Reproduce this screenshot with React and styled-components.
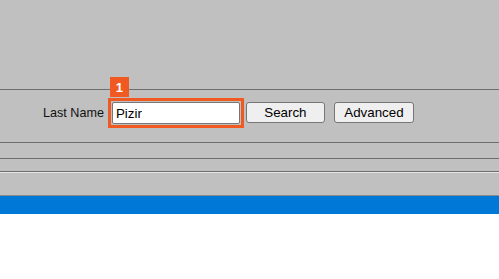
import React from 'react'
import styled, { createGlobalStyle } from 'styled-components'

const GlobalStyle = createGlobalStyle`
  html, body {
    margin: 0;
    padding: 0;
    background: #ffffff;
    font-family: "Liberation Sans", Arial, sans-serif;
  }
`

const Page = styled.div`
  width: 499px;
  display: flex;
  flex-direction: column;
`

const Band = styled.div`
  background: #c0c0c0;
  height: ${p => p.h}px;
  border-bottom: 1px solid ${p => p.line || '#6e6e6e'};
  border-top: ${p => (p.lit ? '1px solid #e6e6e6' : 'none')};
`

const SearchRow = styled.div`
  background: #c0c0c0;
  height: 53px;
  box-sizing: border-box;
  border-bottom: 1px solid #6e6e6e;
  display: flex;
  align-items: flex-start;
  padding: 8px 0 0 43px;
`

const Label = styled.label`
  font-size: 12.6px;
  line-height: 22px;
  color: #111;
  margin: 4px 4px 0 0;
`

const Highlight = styled.div`
  position: relative;
  border: 3px solid #f05a22;
  padding: 1px;
  display: flex;
`

const Badge = styled.span`
  position: absolute;
  left: -1px;
  top: -24px;
  width: 19px;
  height: 20px;
  background: #f05a22;
  color: #fff;
  font-weight: bold;
  font-size: 13px;
  display: flex;
  align-items: center;
  justify-content: center;
`

const Input = styled.input`
  width: 128px;
  height: 22px;
  box-sizing: border-box;
  border: 1px solid #767676;
  border-radius: 2px;
  padding: 0 3px;
  font-family: "Liberation Sans", Arial, sans-serif;
  font-size: 13.33px;
  color: #000;
  background: #fff;
  outline: none;
`

const Button = styled.button`
  width: ${p => p.w}px;
  height: 21px;
  margin: 4px 0 0 ${p => p.gap}px;
  box-sizing: border-box;
  border: 1px solid #767676;
  border-radius: 3px;
  background: #efefef;
  font-family: "Liberation Sans", Arial, sans-serif;
  font-size: 13.33px;
  color: #000;
  padding: 0;
`

const Blue = styled.div`
  background: #0078d7;
  height: 18px;
`

export default function App() {
  return (
    <>
      <GlobalStyle />
      <Page>
        <Band h={89} />
        <SearchRow>
          <Label>Last Name</Label>
          <Highlight>
            <Badge>1</Badge>
            <Input defaultValue="Pizir" />
          </Highlight>
          <Button w={79} gap={2}>Search</Button>
          <Button w={80} gap={9}>Advanced</Button>
        </SearchRow>
        <Band h={15} />
        <Band h={12} />
        <Band h={22} line="#8a8a8a" lit />
        <Blue />
      </Page>
    </>
  )
}
